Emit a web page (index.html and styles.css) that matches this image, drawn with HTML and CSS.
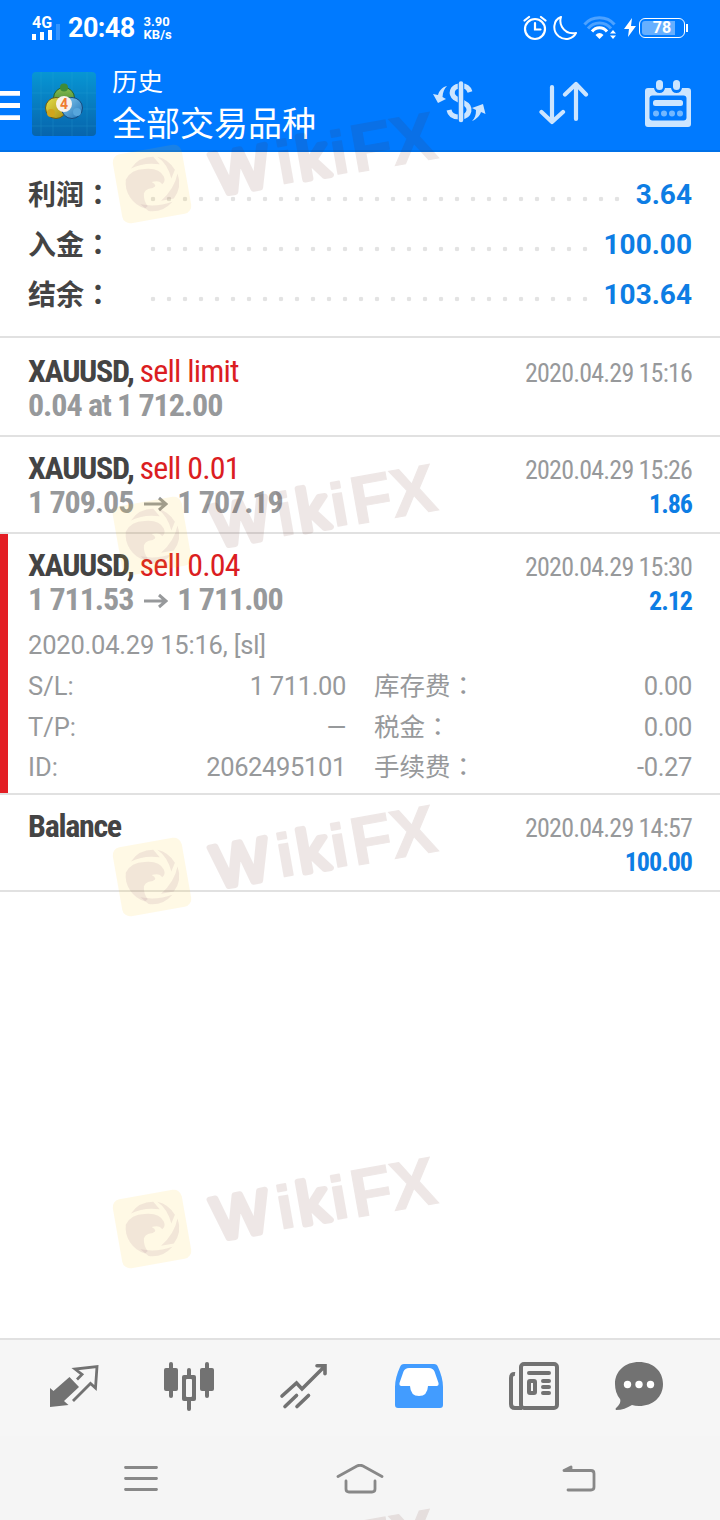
FILE: index.html
```html
<!DOCTYPE html>
<html lang="zh-CN">
<head>
    <meta charset="UTF-8">
    <meta name="viewport" content="width=device-width, initial-scale=1.0">
    <title>历史</title>
    <link rel="stylesheet" href="styles.css">
</head>
<body>
    <div class="screen">
        <header class="header">
            <div class="status-bar">
                <div class="signal">
                    <span class="network">4G</span>
                    <svg width="28" height="11" viewBox="0 0 28 11" fill="#fff">
                        <rect x="0" y="5" width="4" height="6"/>
                        <rect x="8" y="3" width="4" height="8"/>
                        <rect x="16" y="1" width="4" height="10"/>
                        <rect x="24" y="-5" width="4" height="16" opacity=".2"/>
                    </svg>
                </div>
                <span class="clock">20:48</span>
                <div class="speed"><span>3.90</span><span>KB/s</span></div>
                <div class="status-icons">
                    <svg width="24" height="26" viewBox="0 0 24 26" fill="none" stroke="#fff" stroke-width="2.2">
                        <circle cx="12" cy="14" r="10"/>
                        <path d="M12 8v6.500h5.500M1.500 5.500 6 2M22.500 5.500 18 2" stroke-linecap="round"/>
                    </svg>
                    <svg width="24" height="26" viewBox="0 0 24 26" fill="none" stroke="#fff" stroke-width="2" stroke-linejoin="round">
                        <path d="M8 2C0 5 -1 16 6 21.500C12 26 20 24 23 18C17 19 12 17 9 12C7 8.500 7 5 8 2Z"/>
                    </svg>
                    <svg class="wifi" width="34" height="26" viewBox="0 0 34 26" fill="none" stroke="#fff" stroke-width="3">
                        <path d="M1.500 9.500C9 .500 24 .500 31.500 9.500" opacity=".3"/>
                        <path d="M5 13.500C11 6 22 6 28 13.500" opacity=".3"/>
                        <path d="M9 16.500C13 11.500 20 11.500 24 16.500"/>
                        <path d="M12.500 20Q16.500 16 20.500 20L16.500 24Z" fill="#fff" stroke="none"/>
                        <path d="M27 18.500 30 15 33 18.500ZM27 20.500 30 24 33 20.500Z" fill="#fff" stroke="none"/>
                    </svg>
                    <svg class="bolt" width="12" height="20" viewBox="0 0 12 20"><path d="M8 0 0 11h5L4 19 12 8H7Z" fill="#fff"/></svg>
                    <div class="battery">78</div>
                </div>
            </div>
            <div class="app-bar">
                <svg class="menu" width="20" height="30" viewBox="0 0 20 30" fill="#fff"><path d="M0 0h20v4.700H0zM0 12h20v5H0zM0 24.300h20V29H0z"/></svg>
                <svg class="logo" width="64" height="64" viewBox="0 0 64 64">
                    <defs>
                        <linearGradient id="tile" x1="0" y1="0" x2="0" y2="1"><stop offset="0" stop-color="#0796d4"/><stop offset="1" stop-color="#0764ac"/></linearGradient>
                        <linearGradient id="green" x1="0" y1="0" x2="0" y2="1"><stop offset="0" stop-color="#8bbd4e"/><stop offset="1" stop-color="#2f7c32"/></linearGradient>
                        <linearGradient id="gold" x1="0" y1="0" x2="1" y2="1"><stop offset="0" stop-color="#e5df4a"/><stop offset="1" stop-color="#a88c12"/></linearGradient>
                        <linearGradient id="azure" x1="0" y1="0" x2="1" y2="1"><stop offset="0" stop-color="#8ccdf0"/><stop offset="1" stop-color="#1d72b8"/></linearGradient>
                    </defs>
                    <rect width="64" height="64" rx="4" fill="url(#tile)"/>
                    <path d="M0 21h64M0 37h64M0 54h64M9 0v64M21 0v64M40 0v64M55 0v64" stroke="#38b0dc" stroke-width=".7" opacity=".3"/>
                    <circle cx="32" cy="26" r="10.500" fill="url(#green)" stroke="#24612b"/>
                    <circle cx="24" cy="36" r="10.500" fill="url(#gold)" stroke="#665a18"/>
                    <circle cx="40" cy="36" r="10.500" fill="url(#azure)" stroke="#154b80"/>
                    <circle cx="32" cy="15.500" r="4" fill="#3f8b37"/>
                    <circle cx="19" cy="41" r="4" fill="#d0a51c"/>
                    <circle cx="45" cy="40" r="4" fill="#57a6dc"/>
                    <circle cx="32" cy="32" r="8" fill="#f7f1ec"/>
                    <text x="32" y="37" class="logo-digit">4</text>
                </svg>
                <div class="titles">
                    <div class="subtitle">历史</div>
                    <h1>全部交易品种</h1>
                </div>
                <div class="actions">
                    <svg width="54" height="42" viewBox="0 0 54 42" fill="none" stroke="#cce5ff">
                        <path d="M37 11C35 5 30 4.500 26 5C19 6 17 13 22 17L31 22C39 26 37 35 28 36C21 36.500 17 34 16 29" stroke-width="5"/>
                        <path d="M28 1v40" stroke="#007aff" stroke-width="6.500"/>
                        <path d="M28 2.500v36.500" stroke-width="4.500" stroke-linecap="round"/>
                        <path d="M14 5C9 6 6 10 5 14L0 13 5 22 13 18 9.500 16C10 11 11 8 14 5Z" fill="#cce5ff" stroke="none"/>
                        <path d="M39 40C44 38 47 34 48 31L52.500 33 50 23 39 27 43 29C43 34 42 37 39 40Z" fill="#cce5ff" stroke="none"/>
                    </svg>
                    <svg class="sort" width="50" height="44" viewBox="0 0 50 44" fill="none" stroke="#cce5ff" stroke-width="4.200" stroke-linecap="round" stroke-linejoin="round">
                        <path d="M13 6v35M2.500 31 13 41 24 31M37 38V3M26 13.500 37 3 47 13.500"/>
                    </svg>
                    <svg class="calendar" width="46" height="48" viewBox="0 0 46 48">
                        <path d="M3 8h6q1 5 5.500 5t5.500-5h6q1 5 5.500 5t5.500-5h6q3 0 3 3v33q0 3-3 3H3q-3 0-3-3V11q0-3 3-3Z" fill="#cce5ff"/>
                        <rect x="11" y="0" width="7" height="10" rx="3.500" fill="#cce5ff"/>
                        <rect x="28" y="0" width="7" height="10" rx="3.500" fill="#cce5ff"/>
                        <rect x="4.500" y="15.500" width="37" height="25" rx="3" fill="#007aff"/>
                        <rect x="8" y="20" width="30" height="6" rx="2.500" fill="#cce5ff"/>
                        <g fill="#73b8ff"><circle cx="11" cy="33.500" r="3"/><circle cx="19" cy="33.500" r="3"/><circle cx="27" cy="33.500" r="3"/><circle cx="35" cy="33.500" r="3"/></g>
                    </svg>
                </div>
            </div>
        </header>

        <section class="summary">
            <div class="summary-row"><span class="label">利润<i lang="zh-TW">：</i></span><span class="dots"></span><span class="value">3.64</span></div>
            <div class="summary-row"><span class="label">入金<i lang="zh-TW">：</i></span><span class="dots"></span><span class="value">100.00</span></div>
            <div class="summary-row"><span class="label">结余<i lang="zh-TW">：</i></span><span class="dots"></span><span class="value">103.64</span></div>
        </section>

        <main class="history">
            <article class="deal pending">
                <div class="deal-line"><span class="symbol">XAUUSD, <em>sell limit</em></span><span class="date">2020.04.29 15:16</span></div>
                <div class="deal-line"><span class="price">0.04 at 1 712.00</span></div>
            </article>
            <article class="deal">
                <div class="deal-line"><span class="symbol">XAUUSD, <em>sell 0.01</em></span><span class="date">2020.04.29 15:26</span></div>
                <div class="deal-line">
                    <span class="price">1 709.05 <svg class="arrow" width="24" height="16" viewBox="0 0 24 16"><path d="M0 8h22M15 2l7 6-7 6"/></svg> 1 707.19</span>
                    <span class="profit">1.86</span>
                </div>
            </article>
            <article class="deal open">
                <div class="deal-line"><span class="symbol">XAUUSD, <em>sell 0.04</em></span><span class="date">2020.04.29 15:30</span></div>
                <div class="deal-line">
                    <span class="price">1 711.53 <svg class="arrow" width="24" height="16" viewBox="0 0 24 16"><path d="M0 8h22M15 2l7 6-7 6"/></svg> 1 711.00</span>
                    <span class="profit">2.12</span>
                </div>
                <div class="comment">2020.04.29 15:16, [sl]</div>
                <div class="details">
                    <span>S/L:</span><span>1 711.00</span><span>库存费<i lang="zh-TW">：</i></span><span>0.00</span>
                    <span>T/P:</span><span>—</span><span>税金<i lang="zh-TW">：</i></span><span>0.00</span>
                    <span>ID:</span><span>2062495101</span><span>手续费<i lang="zh-TW">：</i></span><span>-0.27</span>
                </div>
            </article>
            <article class="deal">
                <div class="deal-line"><span class="symbol">Balance</span><span class="date">2020.04.29 14:57</span></div>
                <div class="deal-line"><span class="profit">100.00</span></div>
            </article>
        </main>

        <nav class="tabs">
            <svg class="quotes" width="50" height="50" viewBox="0 0 50 50">
                <path d="M0 23 3.500 26 19.500 12 29 22 14 36 18.500 40 0 42Z" fill="#727272"/>
                <path d="M27 14.500 32 9.500 25 4 47 1.500 45.500 23 40.500 18.500 23 36" fill="none" stroke="#727272" stroke-width="2.800"/>
            </svg>
            <svg width="50" height="50" viewBox="1 0 50 50" fill="#727272">
                <rect x="0" y="6" width="14" height="23" rx="2"/><rect x="5" y="0" width="4" height="36" rx="2"/>
                <rect x="36" y="6" width="14" height="23" rx="2"/><rect x="41" y="0" width="4" height="36" rx="2"/>
                <rect x="23" y="6" width="4" height="43" rx="2"/><rect x="18" y="13" width="14" height="26" rx="2"/>
                <rect x="22" y="17" width="6" height="18" rx="1" fill="#f6f6f6"/>
            </svg>
            <svg width="50" height="50" viewBox="0 0 50 50" fill="none" stroke="#727272" stroke-width="3.600" stroke-linecap="round" stroke-linejoin="miter">
                <path d="M2 34 16.500 21 22 27 44 5M37 3.800h8v8M5 44.500 16.500 33.500M17 44.500 28.500 33.500"/>
            </svg>
            <svg width="50" height="50" viewBox="0 0 50 50">
                <path d="M9 2h30q3 0 4 3c3 7 5 13 5 20v18q0 3-3 3H3q-3 0-3-3V25C0 18 2 12 5 5q1-3 4-3Z" fill="#429cff"/>
                <path d="M14 6h20q4 0 5.500 3.500L43.500 21q.500 3-2 3H33q-.500 10-9 10t-9-10H6.500q-2.500 0-2-3L8.500 9.500Q10 6 14 6Z" fill="#fff"/>
            </svg>
            <svg width="50" height="50" viewBox="0 0 50 50" fill="none" stroke="#727272" stroke-width="4">
                <rect x="11" y="2" width="36" height="44" rx="3"/>
                <path d="M5 12q-4-.500-4 4v26q0 4 4 4h7"/>
                <path d="M19 11h20M33 19h6M33 25h6M33 31h6" stroke-linecap="round"/>
                <rect x="19" y="19" width="6" height="12" rx="1"/>
            </svg>
            <svg class="chat" width="50" height="50" viewBox="0 0 50 50">
                <path d="M24 0C38 0 48 9 48 22S38 44 24 44Q20 44 17 43C12 46 7 48 1 48Q0 47 1 46C5 43 6 39 5 37Q0 31 0 22C0 9 10 0 24 0Z" fill="#727272"/>
                <g fill="#fff"><circle cx="12.500" cy="22.500" r="3.700"/><circle cx="24" cy="22.500" r="3.700"/><circle cx="35.500" cy="22.500" r="3.700"/></g>
            </svg>
        </nav>
        <div class="system-nav">
            <svg width="34" height="26" viewBox="0 0 34 26"><path d="M1.500 1.500h31M1.500 12.500h31M1.500 23.500h31"/></svg>
            <svg width="48" height="30" viewBox="0 1 48 30"><path d="M2 13.500 21 3Q24 1.500 27 3L46 13.500M10 18v8q0 3 3 3h23q3 0 3-3v-8"/></svg>
            <svg width="34" height="28" viewBox="0 0 34 28"><path d="M2 5.500h27q3 0 3 3V22q0 3-3 3H6M2 5.500 9 2v3"/></svg>
        </div>

        <div class="watermarks">
            <svg width="350" height="140" viewBox="0 0 350 140">
                <defs>
                    <g id="wikifx">
                        <g transform="rotate(-10 52 89)">
                            <rect x="17" y="54" width="70" height="70" rx="8" fill="rgba(255,200,0,.1)"/>
                            <g fill="rgba(110,40,90,.09)">
                                <path d="M34 70A27 27 0 0 1 58 62.500L63 71Q48 66 34 70Z"/>
                                <path d="M62 63A27 27 0 0 1 77 79L72 87Q71 72 62 63Z"/>
                                <path d="M79 83A27 27 0 0 1 71 107L58 107Q73 98 79 83Z"/>
                                <path d="M69 110A27 27 0 0 1 44 115L37 107Q53 113 69 110Z"/>
                                <path d="M27 80Q34 71 47 73Q62 74 65 84Q66 89 62 91Q60 86 52 87Q58 92 52 93Q43 92 42 99Q41 105 44 110L41 112A27 27 0 0 1 27 80Z"/>
                            </g>
                        </g>
                        <g transform="translate(112 103) rotate(-10)">
                            <text class="wm-wiki" x="5 70 91 124.500" y="-2">W<tspan class="wm-i">i</tspan>k<tspan class="wm-i">i</tspan></text>
                            <text class="wm-fx" x="145" y="0" textLength="86">FX</text>
                        </g>
                    </g>
                </defs>
                <use href="#wikifx"/>
            </svg>
            <svg width="350" height="140" viewBox="0 0 350 140"><use href="#wikifx"/></svg>
            <svg width="350" height="140" viewBox="0 0 350 140"><use href="#wikifx"/></svg>
            <svg width="350" height="140" viewBox="0 0 350 140"><use href="#wikifx"/></svg>
            <svg width="350" height="140" viewBox="0 0 350 140"><use href="#wikifx"/></svg>
        </div>
    </div>
</body>
</html>
```
FILE: styles.css
```css
* {
    box-sizing: border-box;
}
body {
    margin: 0;
    background: #fff;
    font-family: Roboto, "Noto Sans CJK SC", sans-serif;
    color: #444;
}
svg {
    display: block;
    flex-shrink: 0;
}
/* full-width colon, centred in its cell */
i {
    font-family: "Noto Sans CJK TC", sans-serif;
    font-style: normal;
    line-height: 0;
}
.screen {
    position: relative;
    display: flex;
    flex-direction: column;
    width: 720px;
    height: 1520px;
    overflow: hidden;
}

/* header */
.header {
    height: 152px;
    background: #007aff;
    color: #fff;
    border-bottom: 2px solid #0071e8;
}
.status-bar {
    display: flex;
    align-items: center;
    height: 56px;
    padding: 0 35px 0 32px;
}
.signal {
    width: 28px;
}
.signal svg {
    overflow: visible;
}
.network {
    display: block;
    font-size: 16px;
    font-weight: 700;
    line-height: 13px;
}
.clock {
    margin-left: 8px;
    font-size: 27px;
    font-weight: 700;
    line-height: 58px;
    letter-spacing: -.6px;
}
.speed {
    display: flex;
    flex-direction: column;
    margin-left: 9px;
    font-size: 13px;
    font-weight: 700;
    line-height: 13px;
}
.status-icons {
    display: flex;
    align-items: center;
    margin-left: auto;
}
.status-icons svg {
    margin-right: 6px;
}
.status-icons .wifi {
    margin-right: 7px;
}
.status-icons .bolt {
    margin-right: 3px;
}
.battery {
    position: relative;
    width: 46px;
    height: 20px;
    border: 1.5px solid #fff;
    border-radius: 6px;
    background: linear-gradient(90deg, #66afff 33px, transparent 33px) content-box;
    padding: 2px;
    font-size: 16px;
    font-weight: 700;
    line-height: 14px;
    text-align: center;
}
.battery::after {
    content: "";
    position: absolute;
    right: -4px;
    top: 5px;
    width: 2px;
    height: 8px;
    background: #fff;
}
.app-bar {
    display: flex;
    align-items: flex-start;
    height: 94px;
    padding-right: 29px;
}
.menu {
    margin-top: 35px;
}
.logo {
    margin: 16px 0 0 12px;
}
.logo-digit {
    font: 700 14px Roboto, sans-serif;
    fill: #ee7b30;
    text-anchor: middle;
}
.titles {
    margin-left: 16px;
    padding-top: 9px;
}
.subtitle {
    font-size: 25.5px;
    line-height: 35px;
}
h1 {
    margin: 0;
    font-size: 34px;
    font-weight: 400;
    line-height: 48px;
}
.actions {
    display: flex;
    align-items: flex-start;
    margin-left: auto;
    padding-top: 25px;
}
.sort {
    margin: 0 56px 0 52px;
}
.calendar {
    margin-top: -1px;
}

/* totals */
.summary {
    height: 186px;
    padding: 18px 28px 16px;
    border-bottom: 2px solid #e1e1e1;
}
.summary-row {
    display: flex;
    height: 50px;
    font-size: 28px;
    font-weight: 700;
    line-height: 50px;
}
.label {
    width: 117px;
    padding-top: 1px;
    white-space: nowrap;
}
.dots {
    flex: 1;
    margin-right: 10px;
    background: radial-gradient(circle at 8px 29px, #e3e3e3 2px, transparent 2.600px) repeat-x;
    background-size: 16px 50px;
}
.value, .profit {
    color: #0d7de4;
}

/* deals */
.history {
    flex: 1;
}
.deal {
    height: 97px;
    padding: 14px 28px 0;
    border-bottom: 2px solid #e1e1e1;
}
.deal.pending {
    height: 99px;
    padding-top: 16px;
}
.deal.open {
    height: 261px;
    background: linear-gradient(#e31e24, #e31e24) no-repeat 0 0 / 8px 100%;
}
.deal-line {
    display: flex;
    justify-content: space-between;
    height: 34px;
    line-height: 34px;
    font-family: "Roboto Condensed", Roboto, sans-serif;
    font-stretch: 75%;
    white-space: nowrap;
}
.symbol {
    font-size: 32px;
    font-weight: 700;
    letter-spacing: -1.3px;
}
.symbol em {
    font-style: normal;
    font-weight: 400;
    letter-spacing: -.8px;
    color: #db1d22;
}
.price {
    display: flex;
    gap: 11px;
    align-items: center;
    font-size: 32px;
    font-weight: 700;
    letter-spacing: -1.05px;
    color: #97999b;
}
.arrow {
    margin: 4px -2px 0 0;
}
.arrow path {
    fill: none;
    stroke: #97999b;
    stroke-width: 3;
}
.date {
    padding-top: 2px;
    font-size: 26px;
    letter-spacing: -.8px;
    color: #97999b;
}
.profit {
    margin-left: auto;
    padding-top: 2px;
    font-size: 26px;
    font-weight: 700;
    letter-spacing: -1px;
}
.comment {
    margin-top: 9px;
    font-size: 25.500px;
    line-height: 40px;
    letter-spacing: -.2px;
    color: #97999b;
}
.details {
    display: grid;
    grid-template-columns: 100px 218px 160px 1fr;
    grid-auto-rows: 40.500px;
    font-size: 25.500px;
    line-height: 42px;
    color: #97999b;
}
.details span:nth-child(even) {
    text-align: right;
    letter-spacing: -.350px;
}
.details span:nth-child(4n + 3) {
    padding-left: 28px;
}

/* bottom bars */
.tabs {
    display: flex;
    gap: 65px;
    height: 98px;
    padding: 22px 0 0 50px;
    border-top: 2px solid #e1e1e1;
    background: #f6f6f6;
}
.tabs svg {
    overflow: visible;
}
.tabs .quotes {
    margin-top: 3px;
}
.tabs .chat {
    margin-left: -10px;
}
.system-nav {
    display: flex;
    align-items: center;
    justify-content: space-between;
    height: 84px;
    padding: 2px 124px 0;
    background: #f5f5f5;
}
.system-nav path {
    fill: none;
    stroke: #888;
    stroke-width: 2.800;
    stroke-linecap: round;
    stroke-linejoin: round;
}

/* watermark overlay */
.watermarks {
    position: absolute;
    inset: 0;
    overflow: hidden;
    pointer-events: none;
}
.watermarks svg {
    position: absolute;
    left: 100px;
    overflow: visible;
}
.watermarks svg:nth-child(1) { top: 95px; }
.watermarks svg:nth-child(2) { top: 447px; }
.watermarks svg:nth-child(3) { top: 788px; }
.watermarks svg:nth-child(4) { top: 1140px; }
.watermarks svg:nth-child(5) { top: 1492px; }
.wm-wiki, .wm-fx {
    font-family: "Liberation Sans", sans-serif;
    fill: #5f1e14;
    stroke: #5f1e14;
    opacity: .1;
}
.wm-wiki {
    font-size: 60px;
    stroke-width: 6px;
    stroke-linejoin: round;
}
.wm-i {
    font-weight: 700;
    stroke-width: 2px;
}
.wm-fx {
    font-size: 68px;
    font-weight: 700;
    stroke-width: 1px;
}
```
